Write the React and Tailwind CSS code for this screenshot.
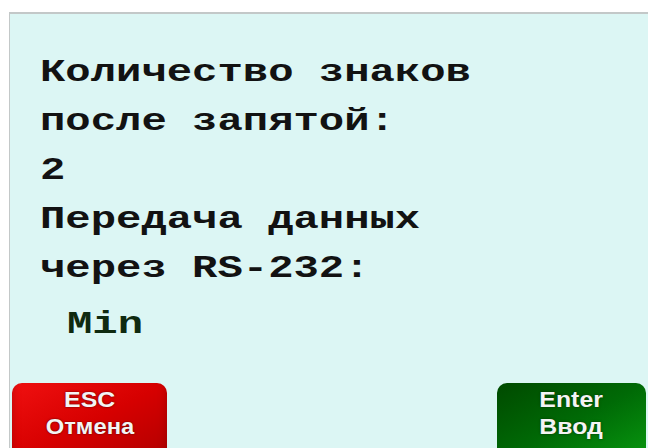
export default function App() {
  const lines = [
    "Количество знаков",
    "после запятой:",
    "2",
    "Передача данных",
    "через RS-232:",
  ];

  return (
    <div className="w-[648px] h-[448px] bg-white overflow-hidden pt-[12px] pl-[9px] flex">
      <div className="flex-1 flex flex-col bg-[#dcf6f4] border-t-2 border-l border-[#c3c8c8] overflow-hidden">
        {/* settings readout */}
        <div
          className="pt-[34px] pl-[30px] text-[32px] leading-[49px] font-bold text-[#121212] whitespace-pre"
          style={{ fontFamily: '"Liberation Mono", "DejaVu Sans Mono", monospace' }}
        >
          {lines.map((t) => (
            <div key={t} className="origin-left scale-x-[1.32]">
              {t}
            </div>
          ))}
          <div className="mt-[7px] pl-[27px] text-[#0f2a10]">
            <div className="origin-left scale-x-[1.32]">Min</div>
          </div>
        </div>

        {/* soft keys */}
        <div
          className="mt-auto flex justify-between items-start pl-[2px] pr-[2px] h-[65px] text-[22px] leading-[27px] font-bold text-[#f4f4f4]"
          style={{ fontFamily: '"Liberation Sans", Arial, sans-serif' }}
        >
          <div className="w-[155px] h-[80px] rounded-[10px] bg-gradient-to-br from-[#f01010] via-[#d60000] to-[#b00000] shadow-[inset_0_-6px_8px_rgba(90,0,0,0.35)] pt-[3px] flex flex-col items-center [text-shadow:0_0_2px_rgba(60,0,0,0.9)]">
            <div className="scale-x-[1.13]">ESC</div>
            <div className="scale-x-[1.08]">Отмена</div>
          </div>
          <div className="w-[149px] h-[80px] rounded-[10px] bg-gradient-to-br from-[#004a00] via-[#006a06] to-[#0a9a10] pt-[3px] flex flex-col items-center [text-shadow:0_0_2px_rgba(0,40,0,0.9)]">
            <div className="scale-x-[1.13]">Enter</div>
            <div className="scale-x-[1.13]">Ввод</div>
          </div>
        </div>
      </div>
    </div>
  );
}
